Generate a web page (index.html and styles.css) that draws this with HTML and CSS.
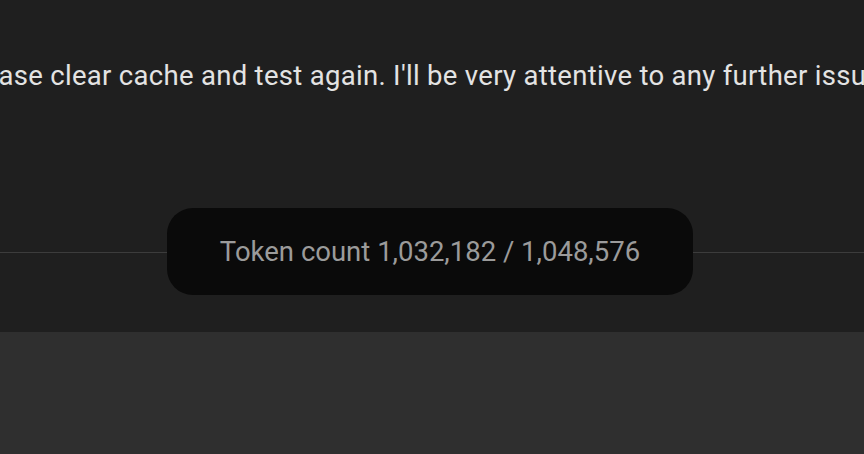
FILE: index.html
```html
<html>
    <head>
        <title>Chat</title>
        <link rel="stylesheet" href="styles.css">
    </head>
    <body>
        <main class="chat">
            <p class="message">Please clear cache and test again. I'll be very attentive to any further issues you find.</p>
            <div class="token-divider">
                <span class="token-pill">Token count 1,032,182 / 1,048,576</span>
            </div>
        </main>
        <footer class="composer"></footer>
    </body>
</html>
```

FILE: styles.css
```css
body {
    margin: 0;
    height: 454px;
    overflow: hidden;
    background: #2f2f2f;
    font-family: "Roboto", "Open Sans", sans-serif;
    display: flex;
    flex-direction: column;
}
.chat {
    background: #1f1f1f;
    height: 332px;
    overflow: hidden;
    padding-top: 58px;
    box-sizing: border-box;
}
.message {
    margin: 0 0 0 -41px;
    white-space: nowrap;
    color: #e3e3e3;
    font-size: 27.5px;
    letter-spacing: 0.3px;
    line-height: 36px;
}
.token-divider {
    margin-top: 114px;
    display: flex;
    align-items: center;
    padding-left: 167px;
    position: relative;
}
.token-divider::before {
    content: "";
    position: absolute;
    left: 0;
    right: 0;
    top: 50%;
    border-top: 1px solid #3c3c3c;
}
.token-pill {
    position: relative;
    width: 526px;
    height: 87px;
    box-sizing: border-box;
    border-radius: 26px;
    background: #0a0a0a;
    color: #9b9b9b;
    font-size: 27.5px;
    display: flex;
    align-items: center;
    justify-content: center;
}
.composer {
    flex: 1;
}
```
